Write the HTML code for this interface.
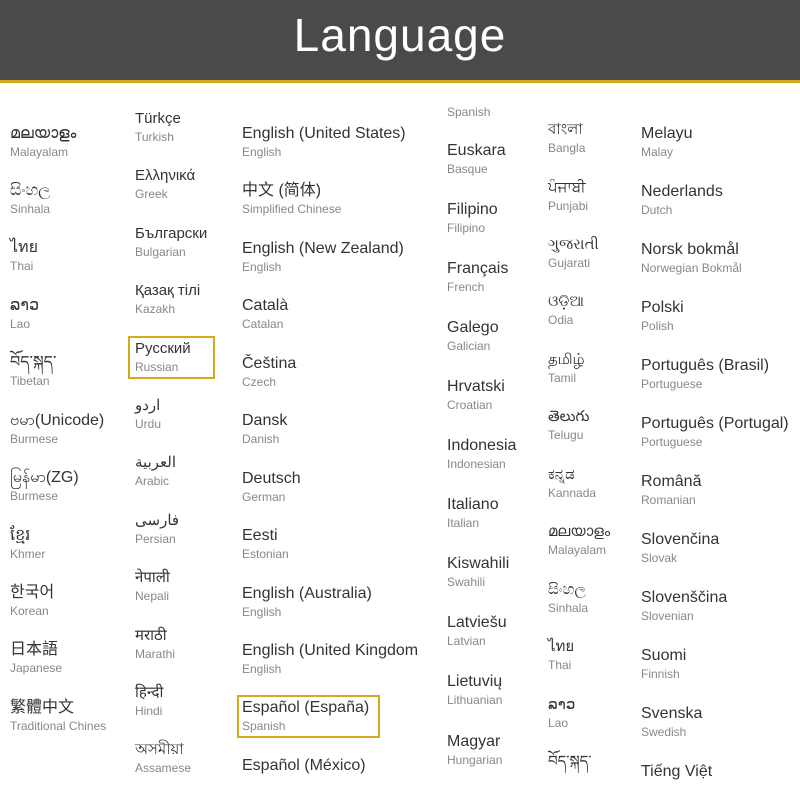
<!DOCTYPE html>
<html><head><meta charset="utf-8"><style>
body{margin:0;width:800px;height:800px;background:#fff;position:relative;overflow:hidden;font-family:"Liberation Sans","Noto Sans CJK SC",sans-serif}
.hd{position:absolute;left:0;top:0;width:800px;height:80px;background:#4a4a4a;border-bottom:3px solid #d4ab1f;box-sizing:content-box}
.hd span{position:absolute;left:0;right:0;top:8px;text-align:center;color:#fff;font-size:46px;letter-spacing:1px}
.i{position:absolute;white-space:nowrap}
.i b{display:block;font-weight:normal;font-size:16px;color:#333;line-height:20px}
.i i{display:block;font-style:normal;font-size:12px;color:#888;line-height:15px;margin-top:1px}
.s b{font-size:15px}
.box{position:absolute;border:2px solid #d4ab1f;box-sizing:border-box}
</style></head><body>
<div class="hd"><span>Language</span></div>
<div class="box" style="left:128px;top:336px;width:87px;height:43px"></div>
<div class="box" style="left:237px;top:695px;width:143px;height:43px"></div>

<div class="i" style="left:10px;top:124px"><b>മലയാളം</b><i>Malayalam</i></div>
<div class="i" style="left:10px;top:181px"><b>සිංහල</b><i>Sinhala</i></div>
<div class="i" style="left:10px;top:238px"><b>ไทย</b><i>Thai</i></div>
<div class="i" style="left:10px;top:296px"><b>ລາວ</b><i>Lao</i></div>
<div class="i" style="left:10px;top:353px"><b>བོད་སྐད་</b><i>Tibetan</i></div>
<div class="i" style="left:10px;top:411px"><b>ဗမာ(Unicode)</b><i>Burmese</i></div>
<div class="i" style="left:10px;top:468px"><b>မြန်မာ(ZG)</b><i>Burmese</i></div>
<div class="i" style="left:10px;top:526px"><b>ខ្មែរ</b><i>Khmer</i></div>
<div class="i" style="left:10px;top:583px"><b>한국어</b><i>Korean</i></div>
<div class="i" style="left:10px;top:640px"><b>日本語</b><i>Japanese</i></div>
<div class="i" style="left:10px;top:698px"><b>繁體中文</b><i>Traditional Chines</i></div>

<div class="i s" style="left:135px;top:109px"><b>Türkçe</b><i>Turkish</i></div>
<div class="i s" style="left:135px;top:166px"><b>Ελληνικά</b><i>Greek</i></div>
<div class="i s" style="left:135px;top:224px"><b>Български</b><i>Bulgarian</i></div>
<div class="i s" style="left:135px;top:281px"><b>Қазақ тілі</b><i>Kazakh</i></div>
<div class="i s" style="left:135px;top:339px"><b>Русский</b><i>Russian</i></div>
<div class="i s" style="left:135px;top:396px"><b>اردو</b><i>Urdu</i></div>
<div class="i s" style="left:135px;top:453px"><b>العربية</b><i>Arabic</i></div>
<div class="i s" style="left:135px;top:511px"><b>فارسی</b><i>Persian</i></div>
<div class="i s" style="left:135px;top:568px"><b>नेपाली</b><i>Nepali</i></div>
<div class="i s" style="left:135px;top:626px"><b>मराठी</b><i>Marathi</i></div>
<div class="i s" style="left:135px;top:683px"><b>हिन्दी</b><i>Hindi</i></div>
<div class="i s" style="left:135px;top:740px"><b>অসমীয়া</b><i>Assamese</i></div>

<div class="i" style="left:242px;top:124px"><b>English (United States)</b><i>English</i></div>
<div class="i" style="left:242px;top:181px"><b>中文 (简体)</b><i>Simplified Chinese</i></div>
<div class="i" style="left:242px;top:239px"><b>English (New Zealand)</b><i>English</i></div>
<div class="i" style="left:242px;top:296px"><b>Català</b><i>Catalan</i></div>
<div class="i" style="left:242px;top:354px"><b>Čeština</b><i>Czech</i></div>
<div class="i" style="left:242px;top:411px"><b>Dansk</b><i>Danish</i></div>
<div class="i" style="left:242px;top:469px"><b>Deutsch</b><i>German</i></div>
<div class="i" style="left:242px;top:526px"><b>Eesti</b><i>Estonian</i></div>
<div class="i" style="left:242px;top:584px"><b>English (Australia)</b><i>English</i></div>
<div class="i" style="left:242px;top:641px;width:180px;overflow:hidden"><b>English (United Kingdom</b><i>English</i></div>
<div class="i" style="left:242px;top:698px"><b>Español (España)</b><i>Spanish</i></div>
<div class="i" style="left:242px;top:756px"><b>Español (México)</b></div>

<div class="i" style="left:447px;top:104px"><i>Spanish</i></div>
<div class="i" style="left:447px;top:141px"><b>Euskara</b><i>Basque</i></div>
<div class="i" style="left:447px;top:200px"><b>Filipino</b><i>Filipino</i></div>
<div class="i" style="left:447px;top:259px"><b>Français</b><i>French</i></div>
<div class="i" style="left:447px;top:318px"><b>Galego</b><i>Galician</i></div>
<div class="i" style="left:447px;top:377px"><b>Hrvatski</b><i>Croatian</i></div>
<div class="i" style="left:447px;top:436px"><b>Indonesia</b><i>Indonesian</i></div>
<div class="i" style="left:447px;top:495px"><b>Italiano</b><i>Italian</i></div>
<div class="i" style="left:447px;top:554px"><b>Kiswahili</b><i>Swahili</i></div>
<div class="i" style="left:447px;top:613px"><b>Latviešu</b><i>Latvian</i></div>
<div class="i" style="left:447px;top:672px"><b>Lietuvių</b><i>Lithuanian</i></div>
<div class="i" style="left:447px;top:732px"><b>Magyar</b><i>Hungarian</i></div>

<div class="i s" style="left:548px;top:120px"><b>বাংলা</b><i>Bangla</i></div>
<div class="i s" style="left:548px;top:178px"><b>ਪੰਜਾਬੀ</b><i>Punjabi</i></div>
<div class="i s" style="left:548px;top:235px"><b>ગુજરાતી</b><i>Gujarati</i></div>
<div class="i s" style="left:548px;top:292px"><b>ଓଡ଼ିଆ</b><i>Odia</i></div>
<div class="i s" style="left:548px;top:350px"><b>தமிழ்</b><i>Tamil</i></div>
<div class="i s" style="left:548px;top:407px"><b>తెలుగు</b><i>Telugu</i></div>
<div class="i s" style="left:548px;top:465px"><b>ಕನ್ನಡ</b><i>Kannada</i></div>
<div class="i s" style="left:548px;top:522px"><b>മലയാളം</b><i>Malayalam</i></div>
<div class="i s" style="left:548px;top:580px"><b>සිංහල</b><i>Sinhala</i></div>
<div class="i s" style="left:548px;top:637px"><b>ไทย</b><i>Thai</i></div>
<div class="i s" style="left:548px;top:695px"><b>ລາວ</b><i>Lao</i></div>
<div class="i s" style="left:548px;top:752px"><b>བོད་སྐད་</b></div>

<div class="i" style="left:641px;top:124px"><b>Melayu</b><i>Malay</i></div>
<div class="i" style="left:641px;top:182px"><b>Nederlands</b><i>Dutch</i></div>
<div class="i" style="left:641px;top:240px"><b>Norsk bokmål</b><i>Norwegian Bokmål</i></div>
<div class="i" style="left:641px;top:298px"><b>Polski</b><i>Polish</i></div>
<div class="i" style="left:641px;top:356px"><b>Português (Brasil)</b><i>Portuguese</i></div>
<div class="i" style="left:641px;top:414px"><b>Português (Portugal)</b><i>Portuguese</i></div>
<div class="i" style="left:641px;top:472px"><b>Română</b><i>Romanian</i></div>
<div class="i" style="left:641px;top:530px"><b>Slovenčina</b><i>Slovak</i></div>
<div class="i" style="left:641px;top:588px"><b>Slovenščina</b><i>Slovenian</i></div>
<div class="i" style="left:641px;top:646px"><b>Suomi</b><i>Finnish</i></div>
<div class="i" style="left:641px;top:704px"><b>Svenska</b><i>Swedish</i></div>
<div class="i" style="left:641px;top:762px"><b>Tiếng Việt</b></div>
</body></html>
